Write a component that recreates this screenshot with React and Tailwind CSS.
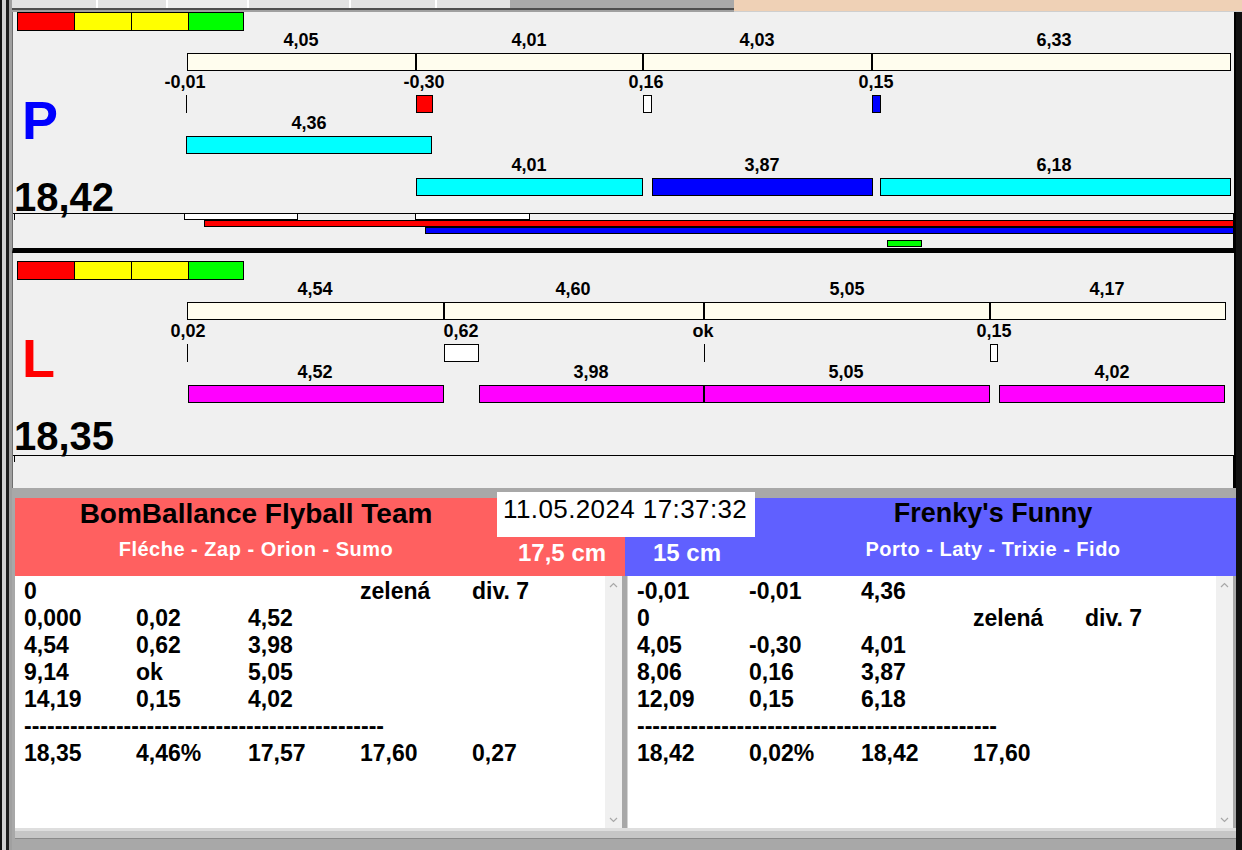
import React from 'react';

const FONT = "font-['Liberation_Sans',Arial,Helvetica,sans-serif]";

const CREAM = 'bg-[#fffdee]';
const CYAN = 'bg-[#00ffff]';
const BLUE = 'bg-[#0000ff]';
const RED = 'bg-[#ff0000]';
const WHITE = 'bg-white';
const GREEN = 'bg-[#00ff00]';
const MAG = 'bg-[#ff00ff]';

// chart primitives, coordinates in page pixels
const box = (x1, x2, y1, y2, bg) => ({ k: 'box', x1, x2, y1, y2, bg });
const lbl = (cx, base, text) => ({ k: 'lbl', cx, base, text });
const vl = (x, y1, y2) => ({ k: 'vl', x, y1, y2 });
const hl = (x1, x2, y) => ({ k: 'hl', x1, x2, y });
const big = (x, base, size, text, cls) => ({ k: 'big', x, base, size, text, cls });
const strip = (x, y) => ({ k: 'strip', x, y });

const pItems = [
  strip(17, 12),
  box(187, 416, 53, 71, CREAM),
  box(416, 643, 53, 71, CREAM),
  box(643, 872, 53, 71, CREAM),
  box(872, 1231, 53, 71, CREAM),
  lbl(301, 46, '4,05'),
  lbl(529, 46, '4,01'),
  lbl(757, 46, '4,03'),
  lbl(1054, 46, '6,33'),
  lbl(185, 88, '-0,01'),
  lbl(424, 88, '-0,30'),
  lbl(646, 88, '0,16'),
  lbl(876, 88, '0,15'),
  vl(186, 95, 113),
  box(416, 433, 95, 113, RED),
  box(643, 652, 95, 113, WHITE),
  box(872, 881, 95, 113, BLUE),
  big(22, 139, 54, 'P', 'text-[54px] leading-[54px] text-[#0000ff]'),
  lbl(309, 129, '4,36'),
  box(186, 432, 136, 154, CYAN),
  lbl(529, 171, '4,01'),
  lbl(762, 171, '3,87'),
  lbl(1054, 171, '6,18'),
  box(416, 643, 178, 196, CYAN),
  box(652, 873, 178, 196, BLUE),
  box(880, 1231, 178, 196, CYAN),
  big(14, 211, 40, '18,42', 'text-[40px] leading-[40px] text-black'),
  hl(13, 1233, 213),
  vl(14, 213, 220),
  vl(1233, 213, 248),
  box(184, 298, 213, 220, WHITE),
  box(415, 530, 213, 220, WHITE),
  box(204, 1234, 220, 227, RED),
  box(425, 1234, 227, 234, BLUE),
  box(887, 922, 240, 247, GREEN),
];

const lItems = [
  strip(17, 261),
  box(187, 444, 302, 320, CREAM),
  box(444, 704, 302, 320, CREAM),
  box(704, 990, 302, 320, CREAM),
  box(990, 1226, 302, 320, CREAM),
  lbl(315, 295, '4,54'),
  lbl(573, 295, '4,60'),
  lbl(847, 295, '5,05'),
  lbl(1107, 295, '4,17'),
  lbl(188, 337, '0,02'),
  lbl(461, 337, '0,62'),
  lbl(703, 337, 'ok'),
  lbl(994, 337, '0,15'),
  vl(187, 344, 362),
  box(444, 479, 344, 362, WHITE),
  vl(704, 344, 362),
  box(990, 998, 344, 362, WHITE),
  big(22, 377, 54, 'L', 'text-[54px] leading-[54px] text-[#ff0000]'),
  lbl(315, 378, '4,52'),
  lbl(591, 378, '3,98'),
  lbl(846, 378, '5,05'),
  lbl(1112, 378, '4,02'),
  box(188, 444, 385, 403, MAG),
  box(479, 704, 385, 403, MAG),
  box(704, 990, 385, 403, MAG),
  box(999, 1225, 385, 403, MAG),
  big(14, 450, 40, '18,35', 'text-[40px] leading-[40px] text-black'),
  hl(13, 1233, 455),
  vl(14, 455, 462),
  vl(1233, 455, 488),
];

function Canvas({ ox, oy, items }) {
  return items.map((it, i) => {
    if (it.k === 'box')
      return (
        <div
          key={i}
          className={`absolute border border-black ${it.bg}`}
          style={{ left: it.x1 - ox, top: it.y1 - oy, width: it.x2 - it.x1, height: it.y2 - it.y1 }}
        />
      );
    if (it.k === 'vl')
      return <div key={i} className="absolute w-px bg-black" style={{ left: it.x - ox, top: it.y1 - oy, height: it.y2 - it.y1 }} />;
    if (it.k === 'hl')
      return <div key={i} className="absolute h-px bg-black" style={{ left: it.x1 - ox, top: it.y - oy, width: it.x2 - it.x1 }} />;
    if (it.k === 'lbl')
      return (
        <div
          key={i}
          className="absolute -translate-x-1/2 whitespace-nowrap text-[18px] leading-[18px] font-bold text-black"
          style={{ left: it.cx - ox, top: it.base - oy - 15.2 }}
        >
          {it.text}
        </div>
      );
    if (it.k === 'big')
      return (
        <div
          key={i}
          className={`absolute whitespace-nowrap font-bold ${it.cls}`}
          style={{ left: it.x - ox, top: it.base - oy - it.size * 0.8465 }}
        >
          {it.text}
        </div>
      );
    if (it.k === 'strip')
      return (
        <div
          key={i}
          className="absolute flex h-[19px] w-[227px] border border-black"
          style={{ left: it.x - ox, top: it.y - oy }}
        >
          <div className="w-[56px] bg-[#ff0000]" />
          <div className="w-[57px] border-l border-black bg-[#ffff00]" />
          <div className="w-[57px] border-l border-black bg-[#ffff00]" />
          <div className="flex-1 border-l border-black bg-[#00ff00]" />
        </div>
      );
    return null;
  });
}

const DASH = '-'.repeat(47);

const leftRows = [
  ['0', '', '', 'zelená', 'div. 7'],
  ['0,000', '0,02', '4,52'],
  ['4,54', '0,62', '3,98'],
  ['9,14', 'ok', '5,05'],
  ['14,19', '0,15', '4,02'],
  null,
  ['18,35', '4,46%', '17,57', '17,60', '0,27'],
];

const rightRows = [
  ['-0,01', '-0,01', '4,36'],
  ['0', '', '', 'zelená', 'div. 7'],
  ['4,05', '-0,30', '4,01'],
  ['8,06', '0,16', '3,87'],
  ['12,09', '0,15', '6,18'],
  null,
  ['18,42', '0,02%', '18,42', '17,60'],
];

function Chevron({ up }) {
  return (
    <svg width="9" height="6" viewBox="0 0 9 6" fill="none">
      <polyline
        points={up ? '1,5 4.5,1.5 8,5' : '1,1 4.5,4.5 8,1'}
        stroke="#a8a8a8"
        strokeWidth="1.2"
      />
    </svg>
  );
}

function ResultList({ rows, className }) {
  return (
    <div className={`flex bg-white ${className}`}>
      <div className="flex-1 pl-[9px] pt-[2px] text-[23px] leading-[27px] font-bold text-black">
        {rows.map((r, i) =>
          r ? (
            <div key={i} className="grid grid-cols-[112px_112px_112px_112px_112px] h-[27px] whitespace-nowrap">
              {r.map((c, j) => (
                <span key={j}>{c}</span>
              ))}
            </div>
          ) : (
            <div key={i} className="h-[27px] whitespace-nowrap">{DASH}</div>
          )
        )}
      </div>
      <div className="w-[17px] bg-[#f0f0f0] flex flex-col items-center justify-between pt-[6px] pb-[5px]">
        <Chevron up />
        <Chevron />
      </div>
    </div>
  );
}

export default function App() {
  return (
    <div className={`w-[1242px] h-[850px] flex overflow-hidden bg-[#a8a8a8] ${FONT}`}>
      {/* left window frame */}
      <div className="flex w-[12px] shrink-0">
        <div className="w-[2px] bg-[#111111]" />
        <div className="w-[4px] bg-[#cfcfcf]" />
        <div className="w-[3px] bg-[#1c1c1c]" />
        <div className="w-[3px] bg-[#a0a0a0]" />
      </div>

      <div className="flex flex-col w-[1230px]">
        {/* tab strip */}
        <div className="flex h-[12px]">
          <div className="flex flex-col w-[722px]">
            <div className="flex h-[8px]">
              <div className="w-[86px] bg-[#e2e2e2] border-r-2 border-white" />
              <div className="w-[70px] bg-[#e2e2e2] border-r-2 border-white" />
              <div className="w-[81px] bg-[#ececec] border-r-2 border-white" />
              <div className="w-[102px] bg-[#e2e2e2] border-r-2 border-white" />
              <div className="w-[86px] bg-[#e2e2e2] border-r-2 border-white" />
              <div className="w-[73px] bg-[#e2e2e2]" />
              <div className="flex-1 bg-[#a9a9a9]" />
            </div>
            <div className="h-[2px] bg-[#4e4e4e]" />
            <div className="h-[2px] bg-[#a0a0a0]" />
          </div>
          <div className="flex flex-col flex-1">
            <div className="h-[11px] bg-[#efd1b6]" />
            <div className="h-px bg-[#cfcfcf]" />
          </div>
        </div>

        <div className="flex flex-1">
          <div className="flex flex-col w-[1224px]">
            {/* P lane */}
            <div className="relative h-[241px] bg-[#f0f0f0] border-l border-[#6e6e6e] border-r-2 border-r-black border-b-[5px] border-b-black">
              <Canvas ox={13} oy={12} items={pItems} />
            </div>
            {/* L lane */}
            <div className="relative h-[235px] bg-[#f0f0f0] border-l border-[#6e6e6e] border-r-2 border-r-black">
              <Canvas ox={13} oy={253} items={lItems} />
            </div>

            {/* teams and results */}
            <div className="relative flex flex-col pl-[3px] pt-[10px] bg-[#a8a8a8]">
              <div className="flex h-[78px]">
                <div className="flex w-[610px] bg-[#ff6060]">
                  <div className="w-[482px] flex flex-col items-center pt-[2px]">
                    <div className="text-[28px] leading-[27px] font-bold text-black whitespace-nowrap">
                      BomBallance Flyball Team
                    </div>
                    <div className="mt-[12px] text-[20px] leading-[20px] tracking-[0.5px] font-bold text-white whitespace-nowrap">
                      Fléche - Zap - Orion - Sumo
                    </div>
                  </div>
                  <div className="pl-[21px] pt-[43px] text-[24px] leading-[24px] font-bold text-white whitespace-nowrap">
                    17,5 cm
                  </div>
                </div>
                <div className="flex flex-1 bg-[#6060ff]">
                  <div className="w-[130px] pl-[28px] pt-[43px] text-[24px] leading-[24px] font-bold text-white whitespace-nowrap">
                    15 cm
                  </div>
                  <div className="flex-1 flex flex-col items-center pt-[2px] pr-[5px]">
                    <div className="text-[27px] leading-[27px] font-bold text-black whitespace-nowrap">
                      Frenky's Funny
                    </div>
                    <div className="mt-[12px] text-[20px] leading-[20px] tracking-[0.5px] font-bold text-white whitespace-nowrap">
                      Porto - Laty - Trixie - Fido
                    </div>
                  </div>
                </div>
              </div>

              <div className="flex h-[252px]">
                <ResultList rows={leftRows} className="w-[607px]" />
                <div className="w-[6px] bg-[#a8a8a8] border-r border-[#d4d4d4]" />
                <ResultList rows={rightRows} className="w-[605px]" />
                <div className="w-[3px] bg-[#a8a8a8]" />
              </div>

              <div className="h-[10px] bg-[#c6c6c6] border-t-[3px] border-[#dedede]" />
              <div className="h-[12px] bg-[#a8a8a8] border-t border-[#8a8a8a]" />

              {/* date stamp over the headers */}
              <div className="absolute left-[485px] top-[4px] w-[258px] h-[45px] bg-white pl-[6px] pt-[4px] text-[26px] leading-[26px] tracking-[0.4px] text-black whitespace-nowrap">
                11.05.2024 17:37:32
              </div>
            </div>
          </div>
          {/* right window frame */}
          <div className="w-[6px] bg-[#111111]" />
        </div>
      </div>
    </div>
  );
}
